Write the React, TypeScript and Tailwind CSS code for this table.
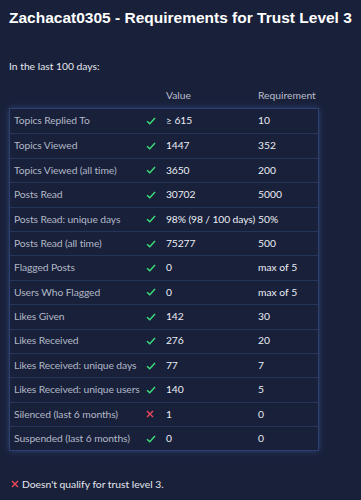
import React from 'react';

const rows: [string, boolean, string, string][] = [
  ['Topics Replied To', true, '≥ 615', '10'],
  ['Topics Viewed', true, '1447', '352'],
  ['Topics Viewed (all time)', true, '3650', '200'],
  ['Posts Read', true, '30702', '5000'],
  ['Posts Read: unique days', true, '98% (98 / 100 days)', '50%'],
  ['Posts Read (all time)', true, '75277', '500'],
  ['Flagged Posts', true, '0', 'max of 5'],
  ['Users Who Flagged', true, '0', 'max of 5'],
  ['Likes Given', true, '142', '30'],
  ['Likes Received', true, '276', '20'],
  ['Likes Received: unique days', true, '77', '7'],
  ['Likes Received: unique users', true, '140', '5'],
  ['Silenced (last 6 months)', false, '1', '0'],
  ['Suspended (last 6 months)', true, '0', '0'],
];

const Check = () => (
  <svg width="10" height="8" viewBox="0 0 10 8" fill="none">
    <path d="M1 4.2 L3.8 6.8 L9 1" stroke="#3ee07a" strokeWidth="1.4" />
  </svg>
);

const Cross = () => (
  <svg width="8" height="8" viewBox="0 0 8 8" fill="none">
    <path d="M1 1 L7 7 M7 1 L1 7" stroke="#f0475a" strokeWidth="1.4" />
  </svg>
);

export default function App() {
  return (
    <div className="w-[361px] h-[500px] bg-[#19213a] overflow-hidden" style={{ fontFamily: 'Lato, "Noto Sans", sans-serif' }}>
      <h1 className="pl-[9px] pt-[7px] text-[15.5px] font-bold text-white leading-[22px] whitespace-nowrap" style={{ fontFamily: '"Liberation Sans", Arial, sans-serif' }}>
        Zachacat0305 - Requirements for Trust Level 3
      </h1>
      <p className="pl-[9px] mt-[29px] text-[10.3px] text-[#e4e6ee] leading-[16px]">In the last 100 days:</p>
      <div className="ml-[6px] mt-[13px] grid grid-cols-[134px_22px_92px_1fr] pl-[4px] text-[10.3px] text-[#b9bdca] leading-[16px]">
        <span />
        <span />
        <span>Value</span>
        <span>Requirement</span>
      </div>
      <div className="ml-[9px] mt-[5px] w-[310px] border border-[#2c4170] bg-[#18203a] shadow-[0_0_6px_rgba(70,110,190,0.45)]">
        {rows.map(([label, ok, value, req], i) => (
          <div
            key={label}
            className={`grid grid-cols-[130px_22px_92px_1fr] items-center pl-[4px] h-[24.4px] text-[10.3px] ${i > 0 ? 'border-t border-[#25345a]' : ''}`}
          >
            <span className="text-[#b3b8c6] whitespace-nowrap tracking-[-0.1px]">{label}</span>
            <span className="flex pl-[2px]">{ok ? <Check /> : <Cross />}</span>
            <span className="text-[#eceef4] whitespace-nowrap tracking-[-0.1px]">{value}</span>
            <span className="text-[#eceef4] whitespace-nowrap">{req}</span>
          </div>
        ))}
      </div>
      <div className="pl-[11px] mt-[25px] flex items-center gap-[3px] text-[10.3px] leading-[16px] text-[#e4e6ee]">
        <Cross />
        <span>Doesn't qualify for trust level 3.</span>
      </div>
    </div>
  );
}
